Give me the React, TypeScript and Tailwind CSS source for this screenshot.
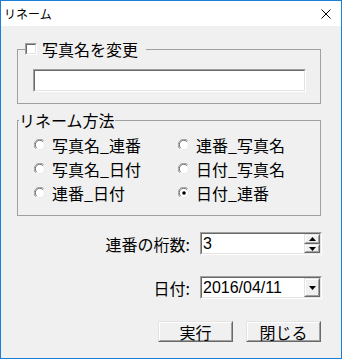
import React from "react";

const jp = { fontFamily: '"Noto Sans CJK JP", "Noto Sans", sans-serif' };
const lat = { fontFamily: '"Liberation Sans", Arial, sans-serif' };

function Sunken({ children, className = "" }: { children?: React.ReactNode; className?: string }) {
  return (
    <div className={`border border-t-[#a0a0a0] border-l-[#a0a0a0] border-b-white border-r-white ${className}`}>
      <div className="h-full border border-t-[#696969] border-l-[#696969] border-b-[#e3e3e3] border-r-[#e3e3e3] bg-white flex">
        {children}
      </div>
    </div>
  );
}

function Raised({ children, className = "" }: { children?: React.ReactNode; className?: string }) {
  return (
    <div className={`border border-t-[#e3e3e3] border-l-[#e3e3e3] border-b-[#696969] border-r-[#696969] ${className}`}>
      <div className="h-full border border-t-white border-l-white border-b-[#a0a0a0] border-r-[#a0a0a0] bg-[#f0f0f0] flex items-center justify-center">
        {children}
      </div>
    </div>
  );
}

function Radio({ label, checked = false }: { label: string; checked?: boolean }) {
  return (
    <div className="h-[24px] flex items-center">
      <svg width="12" height="12" viewBox="0 0 12 12" className="shrink-0">
        <circle cx="6" cy="6" r="5.5" fill="#fff" />
        <path d="M1.8 9.8 A5.3 5.3 0 0 1 9.8 1.8" fill="none" stroke="#a0a0a0" strokeWidth="1" />
        <path d="M2.6 9 A4.2 4.2 0 0 1 9 2.6" fill="none" stroke="#696969" strokeWidth="1" />
        <path d="M9.4 2.6 A4.4 4.4 0 0 1 2.6 9.4" fill="none" stroke="#e3e3e3" strokeWidth="1" />
        {checked && <circle cx="6" cy="6" r="1.8" fill="#000" />}
      </svg>
      <span className="ml-[6px] text-[16px] leading-[18px] text-black" style={jp}>
        {label}
      </span>
    </div>
  );
}

export default function App() {
  return (
    <div className="w-[342px] h-[359px] border border-[#1c7ed6] flex flex-col bg-[#f0f0f0]" style={jp}>
      <div className="h-[25px] bg-white flex items-center justify-between pl-[3px] pr-[10px] shrink-0">
        <span className="text-[12px] leading-none text-black" style={jp}>リネーム</span>
        <svg width="10" height="10" viewBox="0 0 10 10">
          <path d="M0.5 0.5 L9.5 9.5 M9.5 0.5 L0.5 9.5" stroke="#000" strokeWidth="1" />
        </svg>
      </div>

      <div className="flex-1 pl-[16px] pr-[20px] pt-[14px] flex flex-col">
        <fieldset className="border border-[#a0a0a0] p-0 m-0">
          <legend className="ml-[7px] h-[18px] pr-[8px] p-0 flex items-center">
            <div className="w-[12px] h-[12px] border border-t-[#a0a0a0] border-l-[#a0a0a0] border-b-white border-r-white">
              <div className="w-full h-full border border-t-[#696969] border-l-[#696969] border-b-[#e3e3e3] border-r-[#e3e3e3] bg-white" />
            </div>
            <span className="ml-[5px] text-[16px] leading-[18px] text-black" style={jp}>写真名を変更</span>
          </legend>
          <div className="pl-[15px] pr-[14px] pt-[11px] pb-[11px]">
            <Sunken className="h-[23px]" />
          </div>
        </fieldset>

        <fieldset className="border border-[#a0a0a0] p-0 m-0 mt-[7px]">
          <legend className="ml-[1px] h-[18px] p-0 flex items-center">
            <span className="text-[16px] leading-[18px] text-black" style={jp}>リネーム方法</span>
          </legend>
          <div className="pl-[16px] pt-[4px] pb-[10px] grid grid-cols-[144px_1fr]">
            <Radio label="写真名_連番" />
            <Radio label="連番_写真名" />
            <Radio label="写真名_日付" />
            <Radio label="日付_写真名" />
            <Radio label="連番_日付" />
            <Radio label="日付_連番" checked />
          </div>
        </fieldset>

        <div className="mt-[16px] mr-[-1px] flex items-center justify-end">
          <span className="text-[16px] leading-[18px] text-black mr-[10px]" style={jp}>連番の桁数:</span>
          <Sunken className="w-[122px] h-[23px]">
            <span className="flex-1 pl-[1px] text-[16px] leading-[19px] text-black" style={lat}>3</span>
            <div className="w-[16px] flex flex-col">
              <Raised className="h-[10px] w-[16px]">
                <svg width="7" height="4" viewBox="0 0 7 4"><path d="M3.5 0 L7 4 L0 4 Z" fill="#000" /></svg>
              </Raised>
              <Raised className="h-[9px] w-[16px]">
                <svg width="7" height="4" viewBox="0 0 7 4"><path d="M0 0 L7 0 L3.5 4 Z" fill="#000" /></svg>
              </Raised>
            </div>
          </Sunken>
        </div>

        <div className="mt-[21px] mr-[-1px] flex items-center justify-end">
          <span className="text-[16px] leading-[18px] text-black mr-[10px]" style={jp}>日付:</span>
          <Sunken className="w-[122px] h-[23px]">
            <span className="flex-1 pl-[1px] text-[16px] leading-[19px] text-black" style={lat}>2016/04/11</span>
            <Raised className="w-[16px] h-full">
              <svg width="7" height="4" viewBox="0 0 7 4"><path d="M0 0 L7 0 L3.5 4 Z" fill="#000" /></svg>
            </Raised>
          </Sunken>
        </div>

        <div className="mt-[22px] flex justify-end gap-[13px]">
          <Raised className="w-[75px] h-[21px]">
            <span className="text-[16px] leading-[18px] text-black" style={jp}>実行</span>
          </Raised>
          <Raised className="w-[75px] h-[21px]">
            <span className="text-[16px] leading-[18px] text-black" style={jp}>閉じる</span>
          </Raised>
        </div>
      </div>
    </div>
  );
}
